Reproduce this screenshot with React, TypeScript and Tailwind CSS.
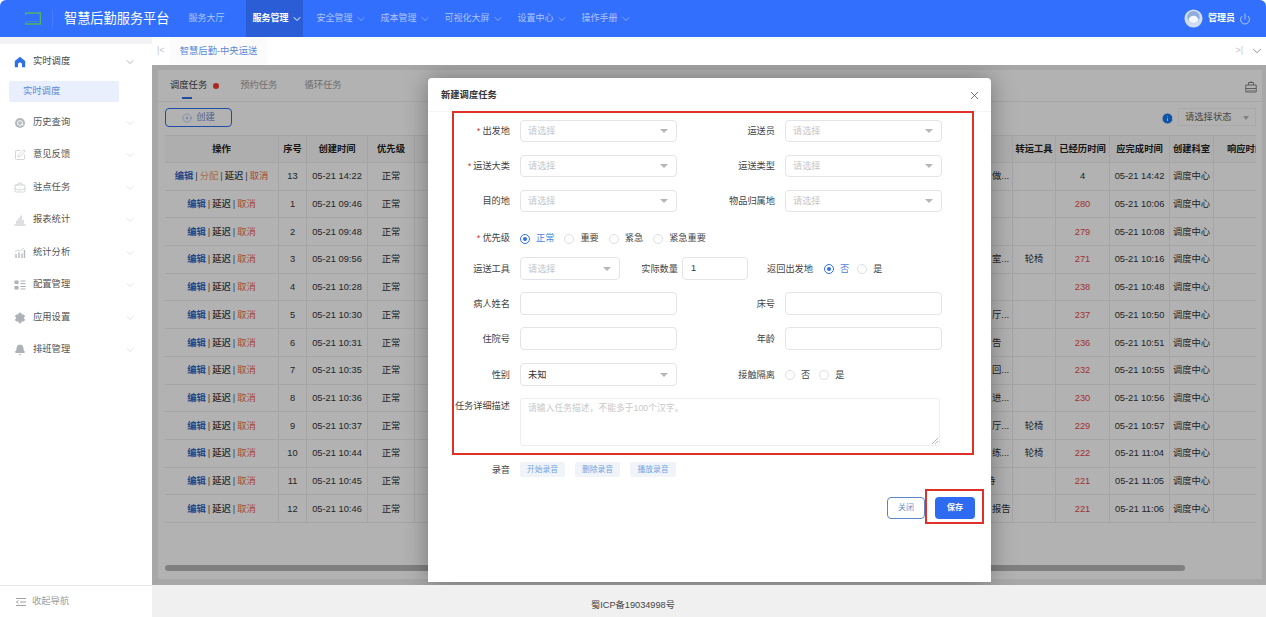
import React from 'react';
import { ChevronDown, X, Power, SquarePen, BriefcaseBusiness, Settings, Bell, CirclePlus, Info } from 'lucide-react';

const NAV = [
  { label: '安全管理' },
  { label: '成本管理' },
  { label: '可视化大屏' },
  { label: '设置中心' },
  { label: '操作手册' },
];

const ROWS = [
  { no: 13, created: '05-21 14:22', tail: '做...', tool: '', spent: 4, due: '05-21 14:42', assign: true },
  { no: 1, created: '05-21 09:46', tail: '', tool: '', spent: 280, due: '05-21 10:06' },
  { no: 2, created: '05-21 09:48', tail: '', tool: '', spent: 279, due: '05-21 10:08' },
  { no: 3, created: '05-21 09:56', tail: '室...', tool: '轮椅', spent: 271, due: '05-21 10:16' },
  { no: 4, created: '05-21 10:28', tail: '', tool: '', spent: 238, due: '05-21 10:48' },
  { no: 5, created: '05-21 10:30', tail: '厅...', tool: '', spent: 237, due: '05-21 10:50' },
  { no: 6, created: '05-21 10:31', tail: '告', tool: '', spent: 236, due: '05-21 10:51' },
  { no: 7, created: '05-21 10:35', tail: '回...', tool: '', spent: 232, due: '05-21 10:55' },
  { no: 8, created: '05-21 10:36', tail: '进...', tool: '', spent: 230, due: '05-21 10:56' },
  { no: 9, created: '05-21 10:37', tail: '厅...', tool: '轮椅', spent: 229, due: '05-21 10:57' },
  { no: 10, created: '05-21 10:44', tail: '练...', tool: '轮椅', spent: 222, due: '05-21 11:04' },
  { no: 11, created: '05-21 10:45', tail: '待', tool: '', spent: 221, due: '05-21 11:05', shifted: true },
  { no: 12, created: '05-21 10:46', tail: '报告', tool: '', spent: 221, due: '05-21 11:06' },
];

const COLS = 'grid grid-cols-[114px_28px_61px_47px_598px_43px_54px_60px_44px_42px]';
const CELL = 'flex items-center justify-center border-r border-[#ececec] overflow-hidden whitespace-nowrap pt-[2px]';

const HomeIcon = () => (
  <svg viewBox="0 0 12 12" className="h-[12px] w-[12px]">
    <path d="M6 .8 11.2 5v6.2H8V8.4a2 2 0 0 0-4 0v2.8H.8V5z" fill="#2f6fe8" />
  </svg>
);

const HistoryIcon = () => (
  <svg viewBox="0 0 12 12" className="h-[12px] w-[12px]">
    <circle cx="6" cy="6" r="5" fill="#b4b8be" />
    <circle cx="6" cy="6" r="2.4" fill="none" stroke="#fff" strokeWidth="1" />
    <path d="M8.4 6v2h1.2" fill="none" stroke="#fff" strokeWidth=".8" />
  </svg>
);

const ReportIcon = () => (
  <svg viewBox="0 0 12 12" className="h-[12px] w-[12px]" fill="none" stroke="#b4b8be" strokeWidth=".9">
    <path d="M.5 11h11M3 10V6.5M5 10V4M7 10V1.5M9 10V6" />
  </svg>
);

const AnalysisIcon = () => (
  <svg viewBox="0 0 12 12" className="h-[12px] w-[12px]" fill="none" stroke="#b4b8be" strokeWidth="1">
    <path d="M2 11V7M5 11V5.5M8 11V6.5M10.5 11V3" strokeWidth="1.4" />
    <path d="M1 5 4 3l2 1 4-3" strokeWidth=".6" />
  </svg>
);

const ConfigIcon = () => (
  <svg viewBox="0 0 12 12" className="h-[12px] w-[12px]" fill="#aeb2b8">
    <rect x=".5" y="1.5" width="4" height="3.5" />
    <rect x=".5" y="7" width="4" height="3.5" />
    <path d="M6.5 1.5h5v1h-5zM6.5 4h5v1h-5zM6.5 7h5v1h-5zM6.5 9.5h5v1h-5z" />
  </svg>
);

const SIDE = [
  { label: '历史查询', icon: <HistoryIcon /> },
  { label: '意见反馈', icon: <SquarePen size={12} strokeWidth={1} color="#a8acb2" /> },
  { label: '驻点任务', icon: <BriefcaseBusiness size={12} strokeWidth={1} color="#a8acb2" /> },
  { label: '报表统计', icon: <ReportIcon /> },
  { label: '统计分析', icon: <AnalysisIcon /> },
  { label: '配置管理', icon: <ConfigIcon /> },
  { label: '应用设置', icon: <Settings size={12} fill="#aeb2b8" color="#aeb2b8" /> },
  { label: '排班管理', icon: <Bell size={12} fill="#aeb2b8" color="#aeb2b8" /> },
];

const Select = ({ className = '', value }: { className?: string; value?: string }) => (
  <div className={`flex h-full items-center justify-between rounded-[4px] border border-[#e2e4e8] pl-[7px] pr-[8px] text-[9.2px] ${className}`}>
    <span className={`pt-[2px] ${value ? 'text-[#333]' : 'text-[#c4c6ca]'}`}>{value ?? '请选择'}</span>
    <span className="h-0 w-0 border-x-[4px] border-t-[4px] border-x-transparent border-t-[#b4b6ba]" />
  </div>
);

const Label = ({ width, required, children }: { width: string; required?: boolean; children: React.ReactNode }) => (
  <div className={`${width} shrink-0 pt-[2px] text-right text-[9.2px] text-[#444]`}>
    {required && <span className="mr-[2px] text-[#e0302a]">*</span>}
    {children}
  </div>
);

const Radio = ({ checked, label, className = '' }: { checked?: boolean; label: string; className?: string }) => (
  <div className={`flex items-center pt-[2px] text-[9.2px] ${className}`}>
    <span className={`flex h-[10px] w-[10px] items-center justify-center rounded-full border ${checked ? 'border-[#2f6fe8]' : 'border-[#dcdee2]'}`}>
      {checked && <span className="h-[4px] w-[4px] rounded-full bg-[#2f6fe8]" />}
    </span>
    <span className={`ml-[6px] ${checked ? 'text-[#4a7fe0]' : 'text-[#444]'}`}>{label}</span>
  </div>
);

const FieldRow = ({ left, right, className = '' }: { left: [string, React.ReactNode, boolean?]; right: [string, React.ReactNode]; className?: string }) => (
  <div className={`flex h-[22px] items-center ${className}`}>
    <Label width="w-[82px]" required={left[2]}>{left[0]}</Label>
    <div className="ml-[10px] h-full w-[157px]">{left[1]}</div>
    <Label width="w-[98px]">{right[0]}</Label>
    <div className="ml-[10px] h-full w-[157px]">{right[1]}</div>
  </div>
);

const TextBox = () => <div className="h-full w-full rounded-[4px] border border-[#e2e4e8]" />;

const App = () => {
  return (
    <div className="flex h-[617px] w-[1266px] flex-col overflow-hidden bg-white font-['Liberation_Sans','Noto_Sans_CJK_SC',sans-serif]">
      <header className="flex h-[37px] shrink-0 items-stretch rounded-t-[6px] bg-[#316ffc] text-white">
        <div className="flex items-center pl-[25px]">
          <svg viewBox="0 0 16 13" className="h-[13px] w-[16px]" fill="none" stroke="#4fb36a" strokeWidth="1.5">
            <path d="M.5 1h15v11H.5V10M.5 3V1" />
            <path d="M2 9.5h11" strokeWidth=".8" stroke="#3f8fb0" />
          </svg>
          <span className="ml-[11px] h-[18px] w-px bg-white/10" />
          <span className="ml-[11px] text-[13.2px] whitespace-nowrap">智慧后勤服务平台</span>
        </div>
        <nav className="ml-[12px] flex items-stretch gap-[7px] text-[9px] text-white/60">
          <div className="flex items-center pl-[7px] pr-[14px]">服务大厅</div>
          <div className="flex items-center bg-[#2a5dd6] pl-[7px] pr-[1px] font-bold text-white">
            服务管理
            <ChevronDown size={12} className="ml-[2px] -mr-[1px]" />
          </div>
          {NAV.map((n) => (
            <div key={n.label} className="flex items-center pl-[7px] pr-[1px]">
              {n.label}
              <ChevronDown size={12} strokeWidth={1.3} className="ml-[2px] -mr-[1px]" />
            </div>
          ))}
        </nav>
        <div className="ml-auto flex items-center pr-[15px]">
          <svg viewBox="0 0 20 20" className="h-[19px] w-[19px]">
            <circle cx="10" cy="10" r="9.5" fill="#cfdcf2" />
            <circle cx="10" cy="8.5" r="6.5" fill="#8faedd" />
            <ellipse cx="10" cy="11" rx="5" ry="3.8" fill="#f4f7fc" />
          </svg>
          <span className="ml-[5px] text-[9px] font-bold">管理员</span>
          <Power size={12} strokeWidth={1.2} className="ml-[4px]" />
        </div>
      </header>

      <div className="flex min-h-0 flex-1">
        <aside className="flex w-[152px] shrink-0 flex-col bg-white">
          <div className="h-[7px] bg-[#f3f3f5]" />
          <div className="flex-1 text-[9.3px] text-[#555]">
            <div className="flex h-[34px] items-center pl-[14px] pr-[16px] pt-[2px]">
              <HomeIcon />
              <span className="ml-[7px] text-[#444]">实时调度</span>
              <ChevronDown size={12} strokeWidth={1} color="#666" className="ml-auto" />
            </div>
            <div className="mx-[9px] mt-[3px] flex h-[21px] w-[110px] items-center rounded-[2px] bg-[#e9effc] pl-[14px] pt-[1px] text-[#5b87d8]">实时调度</div>
            <div className="mt-[3.8px]">
              {SIDE.map((s) => (
                <div key={s.label} className="flex h-[32.43px] items-center pl-[14px] pr-[16px] pt-[2px]">
                  {s.icon}
                  <span className="ml-[7px]">{s.label}</span>
                  <ChevronDown size={12} strokeWidth={1} color="#c4c4c4" className="ml-auto" />
                </div>
              ))}
            </div>
          </div>
          <div className="flex h-[32px] items-center border-t border-[#e8e8e8] pl-[16px] text-[9.3px] text-[#a0a0a0]">
            <svg viewBox="0 0 10 10" className="h-[10px] w-[10px]" fill="none" stroke="#8a8a8a" strokeWidth=".8">
              <path d="M0 1.5h10M4 5h6M0 8.5h10M2.5 3.5 .5 5l2 1.5" />
            </svg>
            <span className="ml-[6px]">收起导航</span>
          </div>
        </aside>

        <main className="flex min-w-0 flex-1 flex-col">
          <div className="flex h-[28px] shrink-0 items-center bg-white text-[9.3px]">
            <span className="ml-[5px] w-[13px] text-[9px] text-[#c4c4c4]">|&lt;</span>
            <div className="flex h-full w-[97px] items-center justify-center bg-[#fbfbfb] pt-[2px] text-[#5b87d8]">智慧后勤-中央运送</div>
            <span className="ml-auto text-[9px] text-[#c4c4c4]">&gt;|</span>
            <ChevronDown size={14} strokeWidth={1.1} color="#555" className="ml-[7px] mr-[2px]" />
          </div>

          <div className="relative min-h-0 flex-1 overflow-hidden bg-[#f0f0f0] pl-[6px] pr-[4px] pt-[5px]">
            <div className="flex h-[509px] flex-col bg-white">
              <div className="relative flex h-[32px] shrink-0 items-center border-b border-[#eeeeee] pl-[12px] pt-[1px] text-[9.3px] text-[#a0a0a0]">
                <span className="text-[#444]">调度任务</span>
                <span className="ml-[6px] h-[6px] w-[6px] rounded-full bg-[#f03a2e]" />
                <span className="ml-[21px]">预约任务</span>
                <span className="ml-[27px]">循环任务</span>
                <span className="absolute bottom-[2px] left-[24px] h-[2px] w-[10px] bg-[#2f6fe8]" />
                <svg viewBox="0 0 12 13" className="ml-auto mr-[5px] h-[13px] w-[12px]" fill="none" stroke="#777" strokeWidth=".9">
                  <path d="M3.5 5V2.5h5V5M6 1v1.5M.8 5h10.4v7H.8zM.8 8.5h10.4" />
                  <path d="M2.5 10.5h7" strokeDasharray="1 1" />
                </svg>
              </div>
              <div className="flex h-[33px] shrink-0 items-start pl-[7px] pr-[6px] pt-[6px]">
                <div className="flex h-[19px] w-[67px] items-center justify-center rounded-[4px] border border-[#2f6fe8] pt-[1px] text-[9.3px] text-[#6f8fd0]">
                  <CirclePlus size={10} strokeWidth={1} />
                  <span className="ml-[4px]">创建</span>
                </div>
                <Info size={13} fill="#1677ee" color="#fff" strokeWidth={1.6} className="ml-auto mt-[4px]" />
                <div className="ml-[4px] flex h-[18px] w-[78px] items-center justify-between border border-[#f2f2f2] pl-[6px] pr-[6px] pt-[1px] text-[9.3px] text-[#666]">
                  请选择状态
                  <span className="h-0 w-0 border-x-[3.5px] border-t-[4px] border-x-transparent border-t-[#bbb]" />
                </div>
              </div>
              <div className="ml-[7px] w-[1091px] text-[9.3px] text-[#333]">
                <div className={`${COLS} h-[28px] border-y border-[#ececec] bg-[#fafafa] font-bold text-[#222]`}>
                  <div className={CELL}>操作</div>
                  <div className={CELL}>序号</div>
                  <div className={CELL}>创建时间</div>
                  <div className={CELL}>优先级</div>
                  <div className={CELL} />
                  <div className={CELL}>转运工具</div>
                  <div className={CELL}>已经历时间</div>
                  <div className={CELL}>应完成时间</div>
                  <div className={CELL}>创建科室</div>
                  <div className={`${CELL} justify-start border-r-0 pl-[13px]`}>响应时间</div>
                </div>
                {ROWS.map((r) => (
                  <div key={r.no} className={`${COLS} h-[27.7px] border-b border-[#ececec]`}>
                    <div className={CELL}>
                      <b className="font-bold text-[#2f66c4]">编辑</b>
                      <span className="mx-[2px] text-[#555]">|</span>
                      {r.assign && (
                        <>
                          <span className="text-[#f0a070]">分配</span>
                          <span className="mx-[2px] text-[#555]">|</span>
                        </>
                      )}
                      <span className="font-medium text-[#333]">延迟</span>
                      <span className="mx-[2px] text-[#555]">|</span>
                      <span className="text-[#ee6a50]">取消</span>
                    </div>
                    <div className={CELL}>{r.no}</div>
                    <div className={CELL}>{r.created}</div>
                    <div className={CELL}>正常</div>
                    <div className={`${CELL} justify-start ${r.shifted ? 'pl-[571px]' : 'pl-[577px]'}`}>{r.tail}</div>
                    <div className={CELL}>{r.tool}</div>
                    <div className={`${CELL} ${r.spent > 100 ? 'text-[#e84a4a]' : ''}`}>{r.spent}</div>
                    <div className={CELL}>{r.due}</div>
                    <div className={CELL}>调度中心</div>
                    <div className={`${CELL} border-r-0`} />
                  </div>
                ))}
                <div className="h-[42px]" />
                <div className="h-[6px] w-[1020px] rounded-full bg-[#b8b8b8]" />
              </div>
            </div>

            <div className="absolute inset-0 bg-black/30">
              <div className="absolute left-[276px] top-[13px] h-[504px] w-[563px] rounded-t-[4px] bg-white shadow-[0_0_24px_rgba(0,0,0,0.35)]">
                <div className="flex h-[34px] items-center justify-between border-b border-[#f4f4f4] pl-[13px] pr-[10px] pt-[2px]">
                  <span className="text-[9.3px] font-bold text-[#333]">新建调度任务</span>
                  <X size={13} strokeWidth={1.3} color="#444" />
                </div>
                <div className="pt-[8px]">
                  <FieldRow left={['出发地', <Select />, true]} right={['运送员', <Select />]} />
                  <FieldRow className="mt-[13px]" left={['运送大类', <Select />, true]} right={['运送类型', <Select />]} />
                  <FieldRow className="mt-[13px]" left={['目的地', <Select />]} right={['物品归属地', <Select />]} />
                  <div className="mt-[15px] flex h-[22px] items-center">
                    <Label width="w-[82px]" required>优先级</Label>
                    <Radio checked label="正常" className="ml-[10px]" />
                    <Radio label="重要" className="ml-[10px]" />
                    <Radio label="紧急" className="ml-[10px]" />
                    <Radio label="紧急重要" className="ml-[10px]" />
                  </div>
                  <div className="mt-[8px] flex h-[23px] items-center">
                    <Label width="w-[82px]">运送工具</Label>
                    <div className="ml-[10px] h-full w-[100px]"><Select /></div>
                    <Label width="w-[58px]">实际数量</Label>
                    <div className="ml-[4px] flex h-full w-[66px] items-center rounded-[4px] border border-[#e2e4e8] pl-[8px] text-[9.2px] text-[#333]">1</div>
                    <Label width="w-[65px]">返回出发地</Label>
                    <Radio checked label="否" className="ml-[11px]" />
                    <Radio label="是" className="ml-[8px]" />
                  </div>
                  <FieldRow className="mt-[12px] !h-[23px]" left={['病人姓名', <TextBox />]} right={['床号', <TextBox />]} />
                  <FieldRow className="mt-[12px] !h-[23px]" left={['住院号', <TextBox />]} right={['年龄', <TextBox />]} />
                  <div className="mt-[13px] flex h-[23px] items-center">
                    <Label width="w-[82px]">性别</Label>
                    <div className="ml-[10px] h-full w-[157px]"><Select value="未知" /></div>
                    <Label width="w-[98px]">接触隔离</Label>
                    <Radio label="否" className="ml-[10px]" />
                    <Radio label="是" className="ml-[9px]" />
                  </div>
                  <div className="mt-[12px] flex">
                    <Label width="w-[82px]">任务详细描述</Label>
                    <div className="relative ml-[10px] h-[48px] w-[420px] rounded-[3px] border border-[#eeeeee] px-[7px] pt-[3px] text-[8.8px] text-[#c8c8c8]">
                      请输入任务描述，不能多于100个汉字。
                      <svg viewBox="0 0 6 6" className="absolute bottom-[1px] right-[1px] h-[6px] w-[6px]" stroke="#888" strokeWidth=".6">
                        <path d="M0 6 6 0M3 6l3-3" />
                      </svg>
                    </div>
                  </div>
                  <div className="mt-[16px] flex h-[15px] items-center">
                    <Label width="w-[82px]">录音</Label>
                    <div className="ml-[10px] flex gap-[10px] text-[7.8px] text-[#72a4e4]">
                      <span className="flex h-[15px] w-[45px] items-center justify-center rounded-[2px] bg-[#f0f4f9]">开始录音</span>
                      <span className="flex h-[15px] w-[45px] items-center justify-center rounded-[2px] bg-[#f0f4f9]">删除录音</span>
                      <span className="flex h-[15px] w-[46px] items-center justify-center rounded-[2px] bg-[#f0f4f9]">播放录音</span>
                    </div>
                  </div>
                  <div className="mt-[20px] flex justify-end gap-[10px] pr-[16px] text-[8px]">
                    <span className="flex h-[22px] w-[38px] items-center justify-center rounded-[4px] border border-[#5b87c8] text-[#6a8fc8]">关闭</span>
                    <span className="flex h-[22px] w-[40px] items-center justify-center rounded-[4px] bg-[#2e6bf0] font-bold text-white">保存</span>
                  </div>
                </div>
                <div className="absolute left-[24px] top-[33px] h-[344px] w-[522px] border-2 border-[#e0302a]" />
                <div className="absolute left-[497px] top-[411px] h-[35px] w-[59px] border-2 border-[#e0302a]" />
              </div>
            </div>
          </div>

          <footer className="flex h-[32px] shrink-0 items-center justify-center bg-[#f0f0f0] pr-[152px] pt-[9px] text-[9.2px] text-[#444]">蜀ICP备19034998号</footer>
        </main>
      </div>
    </div>
  );
};

export default App;
